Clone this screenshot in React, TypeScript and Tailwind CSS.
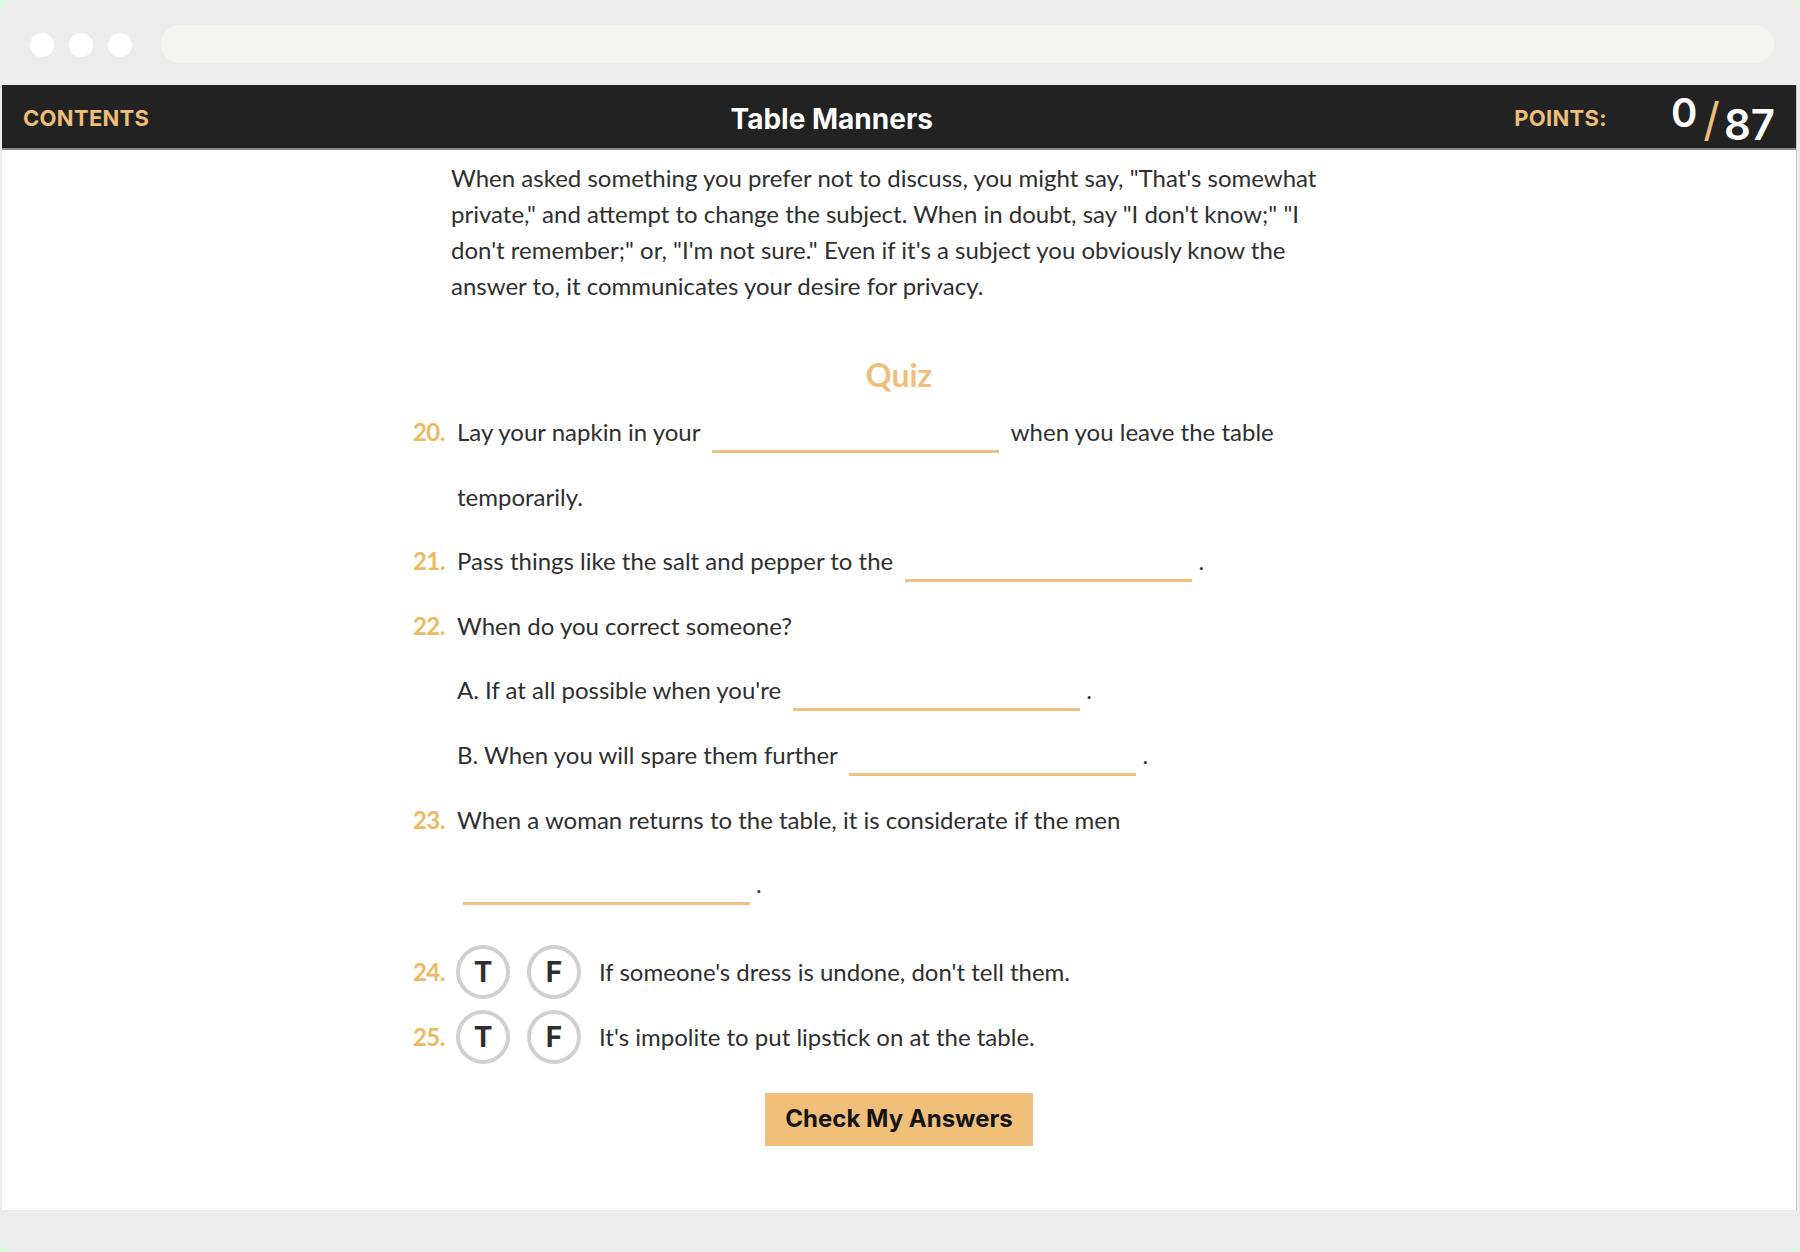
const Blank = () => (
    <span className="inline-block w-[287px] h-[20px] mx-[6px] border-b-[3px] border-[#f0c07f] align-[-12px]" />
);

const Num = ({ n }: { n: number }) => (
    <span className="w-[34px] shrink-0 text-right font-bold text-[#edb962] tracking-[-0.5px]">{n}.</span>
);

const TF = ({ n, text }: { n: number; text: string }) => (
    <div className="flex items-center h-[55px]">
        <Num n={n} />
        <div className="ml-[11px] flex items-center gap-[17px]">
            <span className="w-[54px] h-[54px] rounded-full border-[4px] border-[#d0d0d0] flex items-center justify-center font-['Inter',sans-serif] font-bold text-[28px] text-[#2e2e2e]">T</span>
            <span className="w-[54px] h-[54px] rounded-full border-[4px] border-[#d0d0d0] flex items-center justify-center font-['Inter',sans-serif] font-bold text-[28px] text-[#2e2e2e]">F</span>
        </div>
        <span className="ml-[18px]">{text}</span>
    </div>
);

export default function App() {
    return (
        <div className="min-h-screen bg-[#dcf8dc] font-['Lato',sans-serif]">
            <div className="h-[1252px] rounded-[14px] bg-[#ececec] flex flex-col overflow-hidden">
                {/* browser chrome */}
                <div className="h-[85px] shrink-0 flex items-start pt-[25px] pl-[30px] pr-[26px]">
                    <div className="flex gap-[15px] mt-[8px]">
                        <span className="w-[24px] h-[24px] rounded-full bg-white" />
                        <span className="w-[24px] h-[24px] rounded-full bg-white" />
                        <span className="w-[24px] h-[24px] rounded-full bg-white" />
                    </div>
                    <div className="ml-[29px] flex-1 h-[38px] rounded-full bg-[#f4f4f1]" />
                </div>

                <div className="ml-[2px] mr-[3px] bg-white border-r border-[#c8c8c8] flex flex-col">
                    {/* header */}
                    <div className="h-[65px] pt-[4px] bg-[#222222] border-b-2 border-[#8a8a8a] flex items-center justify-between pl-[21px] pr-[21px] font-['Inter',sans-serif]">
                        <span className="text-[22px] font-bold text-[#eebf78] tracking-[0.3px]">CONTENTS</span>
                        <span className="text-[28px] font-bold text-white">Table Manners</span>
                        <div className="flex items-center">
                            <span className="text-[22px] font-bold text-[#eebf78] tracking-[0.3px]">POINTS:</span>
                            <span className="ml-[64px] text-[40px] font-semibold text-white leading-none mb-[12px]">0</span>
                            <span className="ml-[6px] text-[46px] font-normal text-[#eebf78] leading-none">/</span>
                            <span className="ml-[4px] text-[42px] font-semibold text-white leading-none mt-[12px]">87</span>
                        </div>
                    </div>

                    {/* content */}
                    <div className="w-[976px] mx-auto pt-[10px] pb-[64px] text-[24px] text-[#2f2f2f] flex flex-col">
                        <p className="pl-[40px] leading-[36px] whitespace-nowrap">
                            When asked something you prefer not to discuss, you might say, "That's somewhat
                            <br />
                            private," and attempt to change the subject. When in doubt, say "I don't know;" "I
                            <br />
                            don't remember;" or, "I'm not sure." Even if it's a subject you obviously know the
                            <br />
                            answer to, it communicates your desire for privacy.
                        </p>

                        <h2 className="mt-[51px] h-[40px] leading-[40px] text-center text-[32px] font-bold text-[#efbf7c]">Quiz</h2>

                        <div className="mt-[5px] flex flex-col leading-[64.6px] whitespace-nowrap">
                            <div className="flex">
                                <Num n={20} />
                                <div className="ml-[12px]">
                                    Lay your napkin in your <Blank /> when you leave the table
                                    <br />
                                    temporarily.
                                </div>
                            </div>
                            <div className="flex">
                                <Num n={21} />
                                <div className="ml-[12px]">
                                    Pass things like the salt and pepper to the <Blank />.
                                </div>
                            </div>
                            <div className="flex">
                                <Num n={22} />
                                <div className="ml-[12px]">
                                    When do you correct someone?
                                    <br />
                                    A. If at all possible when you're <Blank />.
                                    <br />
                                    B. When you will spare them further <Blank />.
                                </div>
                            </div>
                            <div className="flex">
                                <Num n={23} />
                                <div className="ml-[12px]">
                                    When a woman returns to the table, it is considerate if the men
                                    <br />
                                    <Blank />.
                                </div>
                            </div>
                        </div>

                        <div className="mt-[28px] flex flex-col gap-[10px]">
                            <TF n={24} text="If someone's dress is undone, don't tell them." />
                            <TF n={25} text="It's impolite to put lipstick on at the table." />
                        </div>

                        <button className="mt-[28px] self-center w-[268px] h-[53px] bg-[#f0bf79] font-['Inter',sans-serif] font-bold text-[24px] text-[#141414]">
                            Check My Answers
                        </button>
                    </div>
                </div>
            </div>
        </div>
    );
}
